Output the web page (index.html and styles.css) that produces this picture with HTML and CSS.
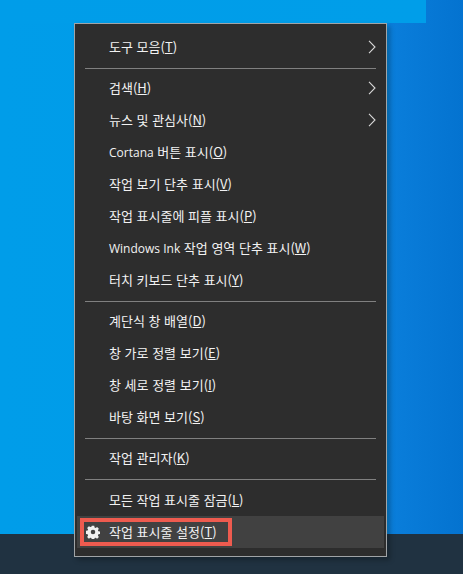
FILE: index.html
```html
<!DOCTYPE html>
<html lang="ko">
<head>
<meta charset="utf-8">
<title>작업 표시줄 메뉴</title>
<link rel="stylesheet" href="styles.css">
</head>
<body>
<div class="desktop">
  <div class="top-band"></div>
  <div class="taskbar"></div>
  <div class="menu">
    <div class="item"><span>도구 모음(<u>T</u>)</span><svg class="chev" viewBox="0 0 8 14"><path d="M1 .8 7 7 1 13.2"/></svg></div>
    <div class="sep"></div>
    <div class="item"><span>검색(<u>H</u>)</span><svg class="chev" viewBox="0 0 8 14"><path d="M1 .8 7 7 1 13.2"/></svg></div>
    <div class="item"><span>뉴스 및 관심사(<u>N</u>)</span><svg class="chev" viewBox="0 0 8 14"><path d="M1 .8 7 7 1 13.2"/></svg></div>
    <div class="item"><span><b class="lat">Cortana</b> 버튼 표시(<u>O</u>)</span></div>
    <div class="item"><span>작업 보기 단추 표시(<u>V</u>)</span></div>
    <div class="item"><span>작업 표시줄에 피플 표시(<u>P</u>)</span></div>
    <div class="item"><span><b class="lat">Windows Ink</b> 작업 영역 단추 표시(<u>W</u>)</span></div>
    <div class="item"><span>터치 키보드 단추 표시(<u>Y</u>)</span></div>
    <div class="sep"></div>
    <div class="item"><span>계단식 창 배열(<u>D</u>)</span></div>
    <div class="item"><span>창 가로 정렬 보기(<u>E</u>)</span></div>
    <div class="item"><span>창 세로 정렬 보기(<u>I</u>)</span></div>
    <div class="item"><span>바탕 화면 보기(<u>S</u>)</span></div>
    <div class="sep"></div>
    <div class="item"><span>작업 관리자(<u>K</u>)</span></div>
    <div class="sep sep-wide"></div>
    <div class="item"><span>모든 작업 표시줄 잠금(<u>L</u>)</span></div>
    <div class="item hover">
      <svg class="gear" viewBox="0 0 16 16"><path fill-rule="evenodd" d="M6.6.8h2.8l.4 2 1.2.5 1.7-1.1 2 2-1.1 1.7.5 1.2 2 .4v2.800l-2 .4-.5 1.200 1.100 1.700-2 2-1.700-1.100-1.200.5-.4 2H6.600l-.4-2-1.200-.5-1.700 1.100-2-2 1.100-1.700-.5-1.200-2-.4V6.600l2-.4.5-1.200-1.100-1.700 2-2 1.700 1.100 1.200-.5zM8 5.400a2.600 2.600 0 1 0 0 5.200 2.600 2.600 0 0 0 0-5.200z"/></svg>
      <span>작업 표시줄 설정(<u>T</u>)</span>
      <div class="callout"></div>
    </div>
  </div>
</div>
</body>
</html>
```
FILE: styles.css
```css
html, body {
  margin: 0;
  padding: 0;
}
body {
  width: 463px;
  height: 574px;
  overflow: hidden;
  font-family: "Noto Sans CJK KR", "Open Sans", sans-serif;
}
.desktop {
  position: relative;
  width: 463px;
  height: 574px;
  background: linear-gradient(90deg, #009de9 0, #009ae8 384px, #0a7edb 390px, #0473d0 463px);
}
.top-band {
  height: 23px;
  width: 426px;
  background: linear-gradient(90deg, #009de9 0, #009ee9 100%);
}
.taskbar {
  position: absolute;
  left: 0;
  right: 0;
  top: 534px;
  height: 40px;
  background: #203241;
}
.menu {
  position: absolute;
  left: 74px;
  top: 23px;
  width: 313px;
  height: 534px;
  box-sizing: border-box;
  border: 1px solid #a0a4a7;
  background: #2d2d2d;
  padding: 7px 2px;
  box-shadow: 3px 3px 5px rgba(0, 0, 0, .28);
  color: #f2f2f2;
  font-size: 13px;
  font-weight: 400;
}
.item {
  position: relative;
  height: 32px;
  display: flex;
  align-items: center;
  padding-left: 32px;
  padding-right: 8px;
}
.item span {
  flex: 1;
  line-height: 16px;
}
.lat {
  font-family: "Open Sans", sans-serif;
  font-size: 12px;
  font-weight: 400;
}
u {
  text-underline-offset: 1px;
}
.chev {
  width: 8px;
  height: 14px;
  fill: none;
  stroke: #d8d8d8;
  stroke-width: 1.1;
}
.sep {
  height: 1px;
  margin: 5px 8px 3px;
  background: #808080;
}
.sep-wide {
  margin-bottom: 4px;
}
.hover {
  background: #414141;
}
.gear {
  position: absolute;
  left: 9px;
  top: 9px;
  width: 14px;
  height: 14px;
  fill: #f0f0f0;
}
.callout {
  position: absolute;
  left: 3px;
  top: 2px;
  width: 144px;
  height: 20px;
  border: 4px solid #ee5b4f;
}
```
